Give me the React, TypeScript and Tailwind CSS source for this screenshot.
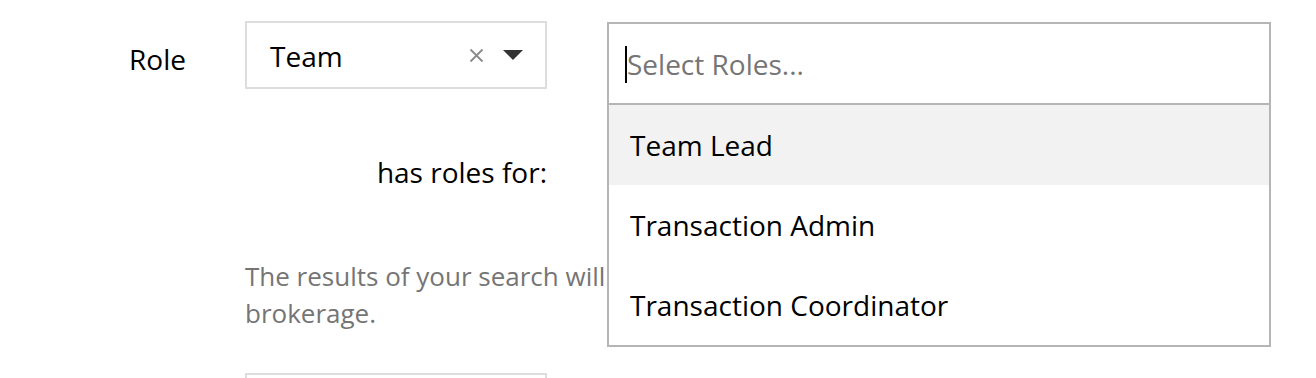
import React from "react";

const roles = ["Team Lead", "Transaction Admin", "Transaction Coordinator"];

const App = () => {
  return (
    <div
      className="w-[1316px] h-[378px] overflow-hidden bg-white text-black"
      style={{ fontFamily: '"Open Sans", "Noto Sans", sans-serif' }}
    >
      {/* Row 1: role type + roles picker */}
      <div className="flex items-start pt-[21px]">
        <div className="w-[245px] pl-[129px] pt-[20px] text-[28px] leading-[37px]">Role</div>

        {/* Team select */}
        <div className="flex items-center w-[302px] h-[68px] border-2 border-[#dddddd] pl-[23px] pr-[22px]">
          <span className="flex-1 text-[28px] leading-[37px] pt-[2px]">Team</span>
          <svg width="15" height="15" viewBox="0 0 15 15" className="mr-[19px]">
            <path d="M1.5 1.5 L13.5 13.5 M13.5 1.5 L1.5 13.5" stroke="#8a8a8a" strokeWidth="1.8" />
          </svg>
          <svg width="20" height="10" viewBox="0 0 20 10">
            <path d="M0 0 H20 L10 10 Z" fill="#333333" />
          </svg>
        </div>

        {/* Roles multi-select, open */}
        <div className="relative ml-[60px] mt-px w-[664px]">
          <div className="flex items-center h-[83px] border-2 border-[#b5b5b5] pl-[16px] pt-[2px]">
            <span className="w-[2px] h-[37px] bg-black" />
            <span className="text-[28px] leading-[37px] text-[#757575]">Select Roles...</span>
          </div>
          <ul className="absolute left-0 top-full w-full bg-white border-2 border-t-0 border-[#b5b5b5]">
            {roles.map((role, index) => (
              <li
                key={role}
                className={`h-[80px] flex items-center pl-[21px] text-[28px] ${index === 0 ? "bg-[#f2f2f2]" : "bg-white"}`}
              >
                {role}
              </li>
            ))}
          </ul>
        </div>
      </div>

      {/* Row 2 */}
      <div className="w-[547px] mt-[49px] text-right text-[28px] leading-[37px]">has roles for:</div>

      {/* help text */}
      <p className="ml-[245px] mt-[67px] text-[26px] leading-[37px] text-[#757575]">
        The results of your search will be limited to your
        <br />
        brokerage.
      </p>

      {/* next field */}
      <div className="ml-[245px] mt-[41px] w-[302px] h-[68px] border-2 border-[#dddddd]" />
    </div>
  );
};

export default App;
